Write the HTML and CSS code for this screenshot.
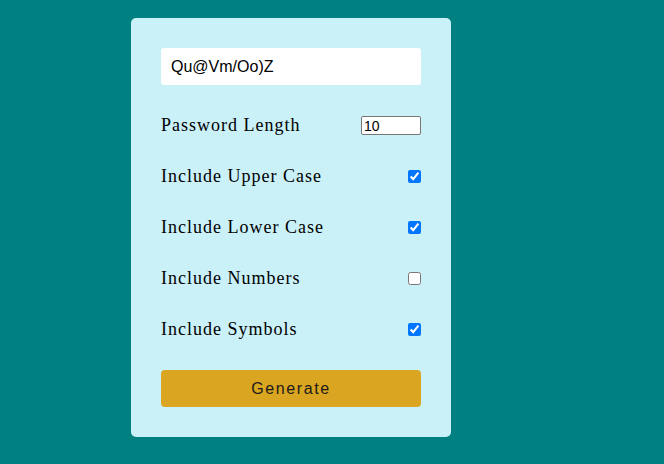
FILE: index.html
```html
<!DOCTYPE html>
<html>
<head>
<meta charset="utf-8">
<link rel="stylesheet" href="styles.css">
</head>
<body>
<div class="card">
  <input class="result" type="text" value="Qu@Vm/Oo)Z">
  <div class="row"><label>Password Length</label><input class="num" type="number" value="10"></div>
  <div class="row"><label>Include Upper Case</label><input class="chk" type="checkbox" checked></div>
  <div class="row"><label>Include Lower Case</label><input class="chk" type="checkbox" checked></div>
  <div class="row"><label>Include Numbers</label><input class="chk" type="checkbox"></div>
  <div class="row"><label>Include Symbols</label><input class="chk" type="checkbox" checked></div>
  <button class="gen">Generate</button>
</div>
</body>
</html>
```
FILE: styles.css
```css
html, body {
  margin: 0;
  height: 100%;
  background: #008080;
}
body {
  padding-top: 18px;
  padding-left: 131px;
  box-sizing: border-box;
}
.card {
  width: 320px;
  height: 419px;
  box-sizing: border-box;
  background: #caf0f8;
  border-radius: 5px;
  padding: 30px;
  display: flex;
  flex-direction: column;
  gap: 30px;
}
.result {
  height: 37px;
  box-sizing: border-box;
  width: 100%;
  border: none;
  border-radius: 3px;
  background: #fff;
  padding: 0 10px;
  font-family: "Liberation Sans", Arial, sans-serif;
  font-size: 16px;
  color: #000;
  outline: none;
}
.row {
  height: 21px;
  display: flex;
  justify-content: space-between;
  align-items: center;
}
.row label {
  font-family: "Liberation Serif", "Times New Roman", serif;
  font-size: 18px;
  letter-spacing: 1px;
  color: #000;
}
.num {
  width: 60px;
  height: 19px;
  box-sizing: border-box;
  margin: 0;
  padding: 0 2px;
  border: 1px solid #767676;
  border-radius: 2px;
  font-family: "Liberation Sans", Arial, sans-serif;
  font-size: 14px;
}
.chk {
  margin: 0;
  width: 13px;
  height: 13px;
}
.gen {
  height: 37px;
  width: 100%;
  border: none;
  border-radius: 4px;
  background: #daa520;
  font-family: "Liberation Sans", Arial, sans-serif;
  font-size: 16px;
  letter-spacing: 1.6px;
  color: #1a1a1a;
  padding: 0;
}
```
